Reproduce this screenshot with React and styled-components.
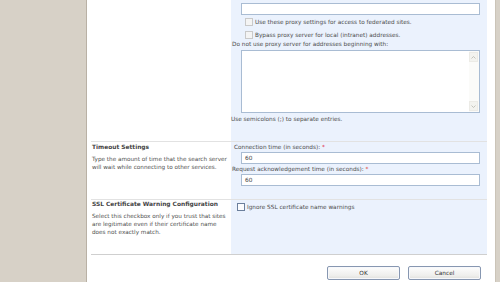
import React from 'react';
import styled, { createGlobalStyle } from 'styled-components';

const Global = createGlobalStyle`
  html, body { margin: 0; padding: 0; }
  body {
    width: 500px;
    height: 282px;
    overflow: hidden;
    background: #fff;
    font-family: "DejaVu Sans", Verdana, sans-serif;
  }
`;

const Page = styled.div`
  display: flex;
  width: 500px;
  height: 282px;
`;

const Gutter = styled.div`
  flex: none;
  width: ${p => p.$w}px;
  background: #d7d1c7;
  ${p => (p.$right ? 'border-left: 1px solid #cbc4b8;' : 'border-right: 1px solid #b9b1a5;')}
`;

const Main = styled.div`
  flex: 1;
  display: flex;
  flex-direction: column;
  padding: 0 8px 0 4px;
  background: #fff;
`;

const Section = styled.div`
  display: grid;
  grid-template-columns: 140px 1fr;
  height: ${p => p.$h}px;
  ${p => (p.$top ? 'border-top: 1px solid #e2e2e2;' : '')}
`;

const Info = styled.div`
  padding: 0 2px 0 1px;
  color: #4e4e4e;
  font-size: 5.7px;
  line-height: 8px;
`;

const Title = styled.div`
  font-weight: bold;
  color: #444;
  font-size: 5.9px;
  line-height: 8px;
  padding-top: ${p => p.$pt || 0}px;
`;

const Desc = styled.div`
  margin-top: 4px;
  white-space: nowrap;
`;

const Controls = styled.div`
  background: #ebf2fd;
  padding: ${p => p.$pad};
  color: #4c4c4c;
  font-size: 5.75px;
  line-height: 8px;
  display: flex;
  flex-direction: column;
`;

const TextInput = styled.div`
  flex: none;
  height: 10px;
  margin: ${p => p.$m || '0'};
  margin-left: ${p => p.$ml || 10}px;
  border: 1px solid #a9bcd3;
  background: #fff;
  padding-left: 3px;
  font-size: 5.8px;
  line-height: 10px;
  color: #444;
`;

const CheckRow = styled.div`
  flex: none;
  display: flex;
  align-items: center;
  gap: ${p => p.$gap || 2}px;
  height: ${p => p.$h || 13}px;
  margin-left: ${p => p.$ml}px;
`;

const Box = styled.span`
  flex: none;
  width: 6px;
  height: 6px;
  border: 1px solid ${p => (p.$strong ? '#6b7f9c' : '#c9c9c9')};
  background: ${p => (p.$strong ? '#fbfcfe' : '#f4f4f4')};
`;

const Label = styled.div`
  flex: none;
  margin-left: ${p => p.$ml || 0}px;
  margin-top: ${p => p.$mt || 0}px;
  white-space: nowrap;
`;

const Req = styled.span`
  color: #e02020;
`;

const AreaBox = styled.div`
  flex: none;
  display: flex;
  height: 61px;
  margin: 2px 0 0 10px;
  border: 1px solid #a9bcd3;
  background: #fff;
`;

const AreaText = styled.div`
  flex: 1;
`;

const ScrollBar = styled.div`
  flex: none;
  width: 9px;
  display: flex;
  flex-direction: column;
  justify-content: space-between;
  padding: 1px 1px 1px 0;
  background: #fbfbf9;
`;

const ScrollBtn = styled.div`
  height: 8px;
  display: flex;
  align-items: center;
  justify-content: center;
  border: 1px solid #ecebe6;
  background: #f3f3ef;
`;

const Divider = styled.div`
  height: 1px;
  background: #cfcfcf;
`;

const Buttons = styled.div`
  display: flex;
  justify-content: flex-end;
  gap: 8px;
  padding: 11px 6px 0 0;
`;

const Button = styled.button`
  width: 73px;
  height: 14px;
  padding: 0;
  border: 1px solid #8797b1;
  border-radius: 2px;
  background: linear-gradient(#fdfdfd, #efefed 70%, #e0e0dc);
  box-shadow: inset 0 0 0 1px #f7f8fb;
  font-family: "DejaVu Sans", Verdana, sans-serif;
  font-size: 5.8px;
  color: #333;
  line-height: 12px;
`;

const Arrow = ({ up }) => (
  <svg width="5" height="3" viewBox="0 0 5 3">
    <path d={up ? 'M0.5 2.5 L2.5 0.5 L4.5 2.5' : 'M0.5 0.5 L2.5 2.5 L4.5 0.5'} stroke="#b8b8b0" strokeWidth="0.8" fill="none" />
  </svg>
);

export default function App() {
  return (
    <>
      <Global />
      <Page>
        <Gutter $w={86} />
        <Main>
          <Section $h={141}>
            <Info />
            <Controls $pad="3px 7px 0 0">
              <TextInput />
              <CheckRow $ml={14}>
                <Box />
                <Label>Use these proxy settings for access to federated sites.</Label>
              </CheckRow>
              <CheckRow $ml={14}>
                <Box />
                <Label>Bypass proxy server for local (intranet) addresses.</Label>
              </CheckRow>
              <Label $ml={1} $mt={-1}>Do not use proxy server for addresses beginning with:</Label>
              <AreaBox>
                <AreaText />
                <ScrollBar>
                  <ScrollBtn><Arrow up /></ScrollBtn>
                  <ScrollBtn><Arrow /></ScrollBtn>
                </ScrollBar>
              </AreaBox>
              <Label $mt={2}>Use semicolons (;) to separate entries.</Label>
            </Controls>
          </Section>

          <Section $top $h={57}>
            <Info>
              <Title $pt={1}>Timeout Settings</Title>
              <Desc>
                Type the amount of time that the search server<br />
                will wait while connecting to other services.
              </Desc>
            </Info>
            <Controls $pad="1px 7px 0 0">
              <Label $ml={3}>Connection time (in seconds): <Req>*</Req></Label>
              <TextInput $m="1px 0 0 0">60</TextInput>
              <Label $ml={1} $mt={1}>Request acknowledgement time (in seconds): <Req>*</Req></Label>
              <TextInput $m="1px 0 0 0">60</TextInput>
            </Controls>
          </Section>

          <Section $top $h={54}>
            <Info>
              <Title $pt={0}>SSL Certificate Warning Configuration</Title>
              <Desc>
                Select this checkbox only if you trust that sites<br />
                are legitimate even if their certificate name<br />
                does not exactly match.
              </Desc>
            </Info>
            <Controls $pad="2px 7px 0 0">
              <CheckRow $ml={6} $h={9} $gap={2}>
                <Box $strong />
                <Label>Ignore SSL certificate name warnings</Label>
              </CheckRow>
            </Controls>
          </Section>

          <Divider />

          <Buttons>
            <Button>OK</Button>
            <Button>Cancel</Button>
          </Buttons>
        </Main>
        <Gutter $w={4} $right />
      </Page>
    </>
  );
}
